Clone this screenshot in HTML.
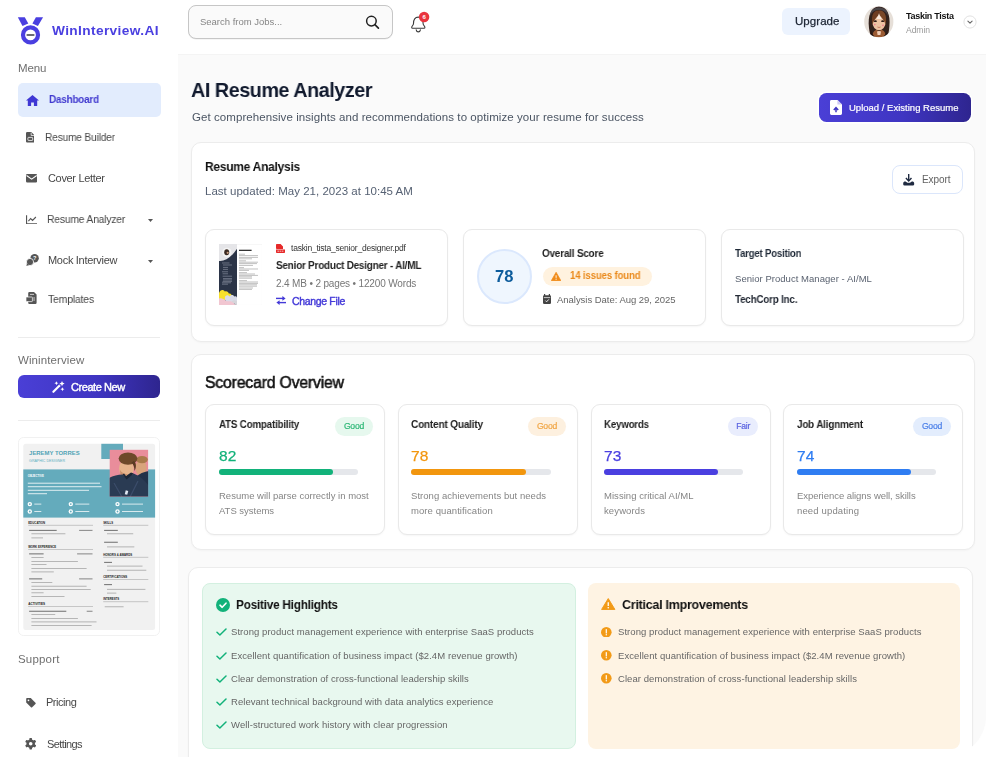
<!DOCTYPE html>
<html lang="en">
<head>
<meta charset="utf-8">
<title>WinInterview.AI - AI Resume Analyzer</title>
<style>
*{box-sizing:border-box;margin:0;padding:0}
html,body{width:987px;height:757px;overflow:hidden;background:#fff}
body{font-family:"Liberation Sans",sans-serif;color:#222;position:relative;-webkit-font-smoothing:antialiased}
.abs{position:absolute}
.t{position:absolute;white-space:nowrap;line-height:1;will-change:transform}
#main{position:absolute;left:177.5px;top:54px;width:808.5px;height:703px;background:#fafafa;border-top:1px solid #f4f4f4}
#side{position:absolute;left:0;top:0;width:178px;height:757px;background:#fff}
.nav{color:#474747;font-size:11px;letter-spacing:-0.2px}
.lab{color:#6f6f6f;font-size:12px}
.card{position:absolute;background:#fff;border:1px solid #ececec;border-radius:10px;box-shadow:0 1px 2px rgba(0,0,0,.03)}
.inner{position:absolute;background:#fff;border:1px solid #e9e9e9;border-radius:9px;box-shadow:0 1px 2px rgba(0,0,0,.04)}
.grad{background:linear-gradient(90deg,#4a3fd6 0%,#3f35c2 55%,#2e258f 100%)}
.sd{font-size:9.5px;color:#858585;letter-spacing:-0.1px}
.li{font-size:9.5px;color:#666;letter-spacing:-0.05px}
.hr{position:absolute;left:18px;width:142px;height:1px;background:#ececec}
</style>
</head>
<body>
<!-- ============ SIDEBAR ============ -->
<div id="side">
  <!-- logo -->
  <svg class="abs" style="left:17px;top:16px" width="28" height="30" viewBox="0 0 28 30">
    <path d="M.85 1.3 H7.8 L11.3 7.4 L5.5 10 Z" fill="#4a3fe0"/>
    <path d="M26.1 1.3 H18.9 L15.4 7.4 L20.9 10 Z" fill="#4a3fe0"/>
    <circle cx="13.5" cy="18.9" r="7.5" fill="none" stroke="#4a3fe0" stroke-width="4.2"/>
    <rect x="9.4" y="17.9" width="8.2" height="2" rx="1" fill="#6b6b72"/>
  </svg>
  <div class="t" id="logo" style="left:51.6px;top:24.3px;font-size:13.7px;font-weight:700;color:#4a3fe0;letter-spacing:0.37px">WinInterview.AI</div>

  <div class="t lab" id="menu" style="letter-spacing:-0.13px;left:18px;top:62.5px;font-size:11.5px">Menu</div>

  <div class="abs" style="left:18px;top:82.5px;width:142.6px;height:34.4px;border-radius:5px;background:#e2ecfd"></div>
  <svg class="abs" style="left:25.5px;top:94.5px" width="13" height="11" viewBox="0 0 13 11"><path d="M6.5 0 L13 5.6 L11.2 5.6 L11.2 11 L7.9 11 L7.9 7.4 L5.1 7.4 L5.1 11 L1.8 11 L1.8 5.6 L0 5.6 Z" fill="#3f37d4"/></svg>
  <div class="t" id="n0" style="transform-origin:0 50%;transform:scaleX(0.9481);left:49px;top:94px;font-size:10.5px;font-weight:700;color:#4039cf;letter-spacing:-0.25px">Dashboard</div>

  <!-- Resume Builder -->
  <svg class="abs" style="left:25.8px;top:132px" width="8.6" height="10.6" viewBox="0 0 9 11"><path d="M1.2 0 H5.6 L9 3.4 V9.8 A1.2 1.2 0 0 1 7.8 11 H1.2 A1.2 1.2 0 0 1 0 9.8 V1.2 A1.2 1.2 0 0 1 1.2 0 Z" fill="#555"/><path d="M5.4 .6 V3.6 H8.4" fill="none" stroke="#fff" stroke-width=".8"/><rect x="2" y="5.6" width="5" height="3.2" rx=".6" fill="none" stroke="#fff" stroke-width=".8"/></svg>
  <div class="t nav" id="n1" style="transform-origin:0 50%;transform:scaleX(0.9264);letter-spacing:-0.2px;left:45px;top:131.5px">Resume Builder</div>

  <!-- Cover Letter -->
  <svg class="abs" style="left:25.8px;top:174.2px" width="11.3" height="8.5" viewBox="0 0 12 9"><rect width="12" height="9" rx="1.4" fill="#555"/><path d="M.6 1.6 L6 5.4 L11.4 1.6" fill="none" stroke="#fff" stroke-width="1.1"/></svg>
  <div class="t nav" id="n2" style="letter-spacing:-0.33px;left:48px;top:172.5px">Cover Letter</div>

  <!-- Resume Analyzer -->
  <svg class="abs" style="left:25.8px;top:214.7px" width="11.2" height="9.6" viewBox="0 0 12 10"><path d="M.6 0 V9.4 H12" fill="none" stroke="#555" stroke-width="1.2"/><path d="M2.6 6.4 L5 3.6 L7 5.6 L10.6 2" fill="none" stroke="#555" stroke-width="1.2"/></svg>
  <div class="t nav" id="n3" style="transform-origin:0 50%;transform:scaleX(0.9386);letter-spacing:-0.2px;left:47.3px;top:214px">Resume Analyzer</div>
  <svg class="abs" style="left:147.5px;top:218.5px" width="5" height="3" viewBox="0 0 5 3"><path d="M0 0 H5 L2.5 3 Z" fill="#555"/></svg>

  <!-- Mock Interview -->
  <svg class="abs" style="left:25.5px;top:254px" width="13" height="12" viewBox="0 0 13 12"><circle cx="8.6" cy="4.2" r="4.2" fill="#555"/><circle cx="4" cy="8" r="3.6" fill="#555" stroke="#fff" stroke-width=".8"/><path d="M1 9.6 L.4 12 L3.2 11" fill="#555"/><text x="8.7" y="6.3" font-size="5.6" font-weight="700" fill="#fff" text-anchor="middle" font-family="Liberation Sans, sans-serif">?</text></svg>
  <div class="t nav" id="n4" style="letter-spacing:-0.3px;left:48.4px;top:254.5px">Mock Interview</div>
  <svg class="abs" style="left:147.5px;top:259.5px" width="5" height="3" viewBox="0 0 5 3"><path d="M0 0 H5 L2.5 3 Z" fill="#555"/></svg>

  <!-- Templates -->
  <svg class="abs" style="left:25.5px;top:292px" width="11" height="12" viewBox="0 0 11 12"><path d="M3.4 0 H8 L10.6 2.6 V10.8 A1.2 1.2 0 0 1 9.4 12 H3.4 A1.2 1.2 0 0 1 2.2 10.8 V1.2 A1.2 1.2 0 0 1 3.4 0 Z" fill="#555"/><rect x="0" y="5" width="6.4" height="4.6" rx=".6" fill="#555" stroke="#fff" stroke-width=".7"/><path d="M4 2.4 H8 M7.2 6 H9 M7.2 8 H9" stroke="#fff" stroke-width=".7"/></svg>
  <div class="t nav" id="n5" style="transform-origin:0 50%;transform:scaleX(0.9517);letter-spacing:-0.2px;left:47.5px;top:293.5px">Templates</div>

  <div class="hr" style="top:337px"></div>
  <div class="t lab" id="wi" style="letter-spacing:0.1px;left:18px;top:355px;font-size:11.5px">Wininterview</div>

  <div class="abs grad" style="left:18px;top:375.3px;width:142px;height:22.8px;border-radius:6px"></div>
  <svg class="abs" style="left:52px;top:380.5px" width="13" height="12" viewBox="0 0 13 12"><path d="M1.4 10.8 L7.6 4.6" stroke="#fff" stroke-width="2.1" stroke-linecap="round"/><path d="M7.2 3.4 L8.8 5 " stroke="#4036c6" stroke-width=".7"/><path d="M10 0 l.8 1.8 1.8.8 -1.8.8 -.8 1.8 -.8-1.8 -1.8-.8 1.8-.8z M4.4 .2 l.6 1.4 1.4.6 -1.4.6 -.6 1.4 -.6-1.4 -1.4-.6 1.4-.6z M10.4 6.2 l.6 1.4 1.4.6 -1.4.6 -.6 1.4 -.6-1.4 -1.4-.6 1.4-.6z" fill="#fff"/></svg>
  <div class="t" id="cn" style="left:71px;top:381.5px;font-size:11px;color:#fff;letter-spacing:-0.43px;-webkit-text-stroke:.4px #fff">Create New</div>

  <div class="hr" style="top:420px"></div>

  <!-- resume thumbnail -->
<svg class="abs" style="left:18px;top:437px" width="142" height="199" viewBox="0 0 142 199"><defs><filter id="b1" x="-10%" y="-10%" width="120%" height="120%"><feGaussianBlur stdDeviation=".5"/></filter></defs>
<rect x=".5" y=".5" width="141" height="198" rx="5" fill="#fff" stroke="#f1f1f1"/>
<rect x="5.3" y="6.8" width="131.8" height="186.2" rx="2.5" fill="#f1f1f1"/>
<rect x="5.3" y="32.4" width="131.8" height="48.2" fill="#64abbc"/>
<rect x="83.3" y="6.8" width="21.7" height="15.2" fill="#64abbc"/>
<g>
<rect x="91.7" y="12.8" width="38.4" height="46.8" fill="#e98d9b"/>
<clipPath id="phc"><rect x="91.7" y="12.8" width="38.4" height="46.8"/></clipPath>
<g clip-path="url(#phc)" filter="url(#b1)">
<ellipse cx="123" cy="31" rx="5.6" ry="7.8" fill="#d9a47c"/>
<ellipse cx="124" cy="22.6" rx="5.8" ry="3.6" fill="#a97a4c"/>
<path d="M116 44 C118 38 124 35 131 34 V60 H114 Z" fill="#22324a"/>
<ellipse cx="108.4" cy="31.6" rx="7.3" ry="9.2" fill="#e6b48c"/>
<path d="M102 33 C104 36 107 37.6 110 37 C108 39 104 39 102.4 37 Z" fill="#c98f6a"/>
<ellipse cx="110" cy="21.6" rx="9.4" ry="6.2" fill="#6e4a2c"/>
<path d="M116 24 C118.6 26 118.4 31 116.4 34 C116.6 30 115.4 27 113.4 25.4 Z" fill="#5a3a22"/>
<path d="M91 41 C95 38.6 100 37.6 104.6 37.4 L108.6 41 L115.6 36.4 C122 39 127 43 131 49 V60 H91 Z" fill="#2a3a52"/>
<path d="M104.6 37.4 L108.6 42.6 L115.6 36.4 L113 35.6 L108 39 L106 36.6 Z" fill="#1a2636"/>
<path d="M96 46 L104 60 M120 44 L112 60" stroke="#3b4e6a" stroke-width="1.2"/>
<rect x="107.2" y="53.6" width="2.6" height="4" fill="#dfe8f2" transform="rotate(14 108.5 55.6)"/>
</g></g>
<text x="11.1" y="17.7" font-family="Liberation Sans, sans-serif" font-weight="700" font-size="5.9" fill="#4fa3b5" textLength="50.5" lengthAdjust="spacingAndGlyphs">JEREMY TORRES</text>
<text x="11.1" y="25" font-family="Liberation Sans, sans-serif" font-size="3.2" fill="#5fb0bf" textLength="36" lengthAdjust="spacingAndGlyphs">GRAPHIC DESIGNER</text>
<text x="9.8" y="40.2" font-family="Liberation Sans, sans-serif" font-weight="700" font-size="3" fill="#fff" textLength="16" lengthAdjust="spacingAndGlyphs">OBJECTIVE</text>
<rect x="9.8" y="45.7" width="72.2" height="1" fill="#fff" opacity="0.8"/>
<rect x="9.8" y="49.2" width="73.7" height="1" fill="#fff" opacity="0.8"/>
<rect x="9.8" y="52.8" width="61.2" height="1" fill="#fff" opacity="0.8"/>
<rect x="9.8" y="56.2" width="19.2" height="1" fill="#fff" opacity="0.8"/>
<circle cx="11.8" cy="67.1" r="2.2" fill="#fff"/><circle cx="11.8" cy="67.1" r=".9" fill="#64abbc"/>
<rect x="16.3" y="66.6" width="7.0" height="1" fill="#fff" opacity="0.75"/>
<circle cx="11.8" cy="74.5" r="2.2" fill="#fff"/><circle cx="11.8" cy="74.5" r=".9" fill="#64abbc"/>
<rect x="16.3" y="74.0" width="7.0" height="1" fill="#fff" opacity="0.75"/>
<circle cx="52.8" cy="67.1" r="2.2" fill="#fff"/><circle cx="52.8" cy="67.1" r=".9" fill="#64abbc"/>
<rect x="57.3" y="66.6" width="14.0" height="1" fill="#fff" opacity="0.75"/>
<circle cx="52.8" cy="74.5" r="2.2" fill="#fff"/><circle cx="52.8" cy="74.5" r=".9" fill="#64abbc"/>
<rect x="57.3" y="74.0" width="14.0" height="1" fill="#fff" opacity="0.75"/>
<circle cx="99.5" cy="67.1" r="2.2" fill="#fff"/><circle cx="99.5" cy="67.1" r=".9" fill="#64abbc"/>
<rect x="104.0" y="66.6" width="21.0" height="1" fill="#fff" opacity="0.75"/>
<circle cx="99.5" cy="74.5" r="2.2" fill="#fff"/><circle cx="99.5" cy="74.5" r=".9" fill="#64abbc"/>
<rect x="104.0" y="74.0" width="21.0" height="1" fill="#fff" opacity="0.75"/>
<text x="10.2" y="86.6" font-family="Liberation Sans, sans-serif" font-weight="700" font-size="3" fill="#222" textLength="17" lengthAdjust="spacingAndGlyphs">EDUCATION</text><rect x="10.2" y="87.9" width="64.8" height="0.5" fill="#9a9a9a" opacity="1"/>
<text x="10.2" y="110.7" font-family="Liberation Sans, sans-serif" font-weight="700" font-size="3" fill="#222" textLength="28" lengthAdjust="spacingAndGlyphs">WORK EXPERIENCE</text><rect x="10.2" y="112.0" width="64.8" height="0.5" fill="#9a9a9a" opacity="1"/>
<text x="10.2" y="168.0" font-family="Liberation Sans, sans-serif" font-weight="700" font-size="3" fill="#222" textLength="17" lengthAdjust="spacingAndGlyphs">ACTIVITIES</text><rect x="10.2" y="169.2" width="64.8" height="0.5" fill="#9a9a9a" opacity="1"/>
<text x="85.2" y="86.6" font-family="Liberation Sans, sans-serif" font-weight="700" font-size="3" fill="#222" textLength="10" lengthAdjust="spacingAndGlyphs">SKILLS</text><rect x="85.2" y="87.9" width="45.1" height="0.5" fill="#9a9a9a" opacity="1"/>
<text x="85.2" y="118.6" font-family="Liberation Sans, sans-serif" font-weight="700" font-size="3" fill="#222" textLength="29" lengthAdjust="spacingAndGlyphs">HONORS &amp; AWARDS</text><rect x="85.2" y="119.9" width="45.1" height="0.5" fill="#9a9a9a" opacity="1"/>
<text x="85.2" y="140.9" font-family="Liberation Sans, sans-serif" font-weight="700" font-size="3" fill="#222" textLength="24" lengthAdjust="spacingAndGlyphs">CERTIFICATIONS</text><rect x="85.2" y="142.1" width="45.1" height="0.5" fill="#9a9a9a" opacity="1"/>
<text x="85.2" y="163.3" font-family="Liberation Sans, sans-serif" font-weight="700" font-size="3" fill="#222" textLength="16" lengthAdjust="spacingAndGlyphs">INTERESTS</text><rect x="85.2" y="164.6" width="45.1" height="0.5" fill="#9a9a9a" opacity="1"/>
<rect x="11.1" y="92.9" width="27.6" height="0.8" fill="#333" opacity="0.85"/>
<rect x="61.1" y="92.9" width="13.4" height="0.8" fill="#555" opacity="0.85"/>
<rect x="13.4" y="96.4" width="34.0" height="0.8" fill="#999" opacity="0.85"/>
<rect x="13.4" y="100.5" width="11.6" height="0.8" fill="#999" opacity="0.85"/>
<rect x="11.1" y="116.5" width="14.5" height="0.8" fill="#333" opacity="0.85"/>
<rect x="59.1" y="116.5" width="15.4" height="0.8" fill="#555" opacity="0.85"/>
<rect x="13.4" y="120.0" width="12.2" height="0.8" fill="#999" opacity="0.85"/>
<rect x="13.4" y="124.0" width="46.5" height="0.8" fill="#999" opacity="0.85"/>
<rect x="13.4" y="127.2" width="15.1" height="0.8" fill="#999" opacity="0.85"/>
<rect x="13.4" y="131.0" width="55.2" height="0.8" fill="#999" opacity="0.85"/>
<rect x="13.4" y="134.5" width="22.4" height="0.8" fill="#999" opacity="0.85"/>
<rect x="11.1" y="141.5" width="13.1" height="0.8" fill="#333" opacity="0.85"/>
<rect x="61.1" y="141.5" width="13.4" height="0.8" fill="#555" opacity="0.85"/>
<rect x="13.4" y="145.0" width="20.9" height="0.8" fill="#999" opacity="0.85"/>
<rect x="13.4" y="148.8" width="55.2" height="0.8" fill="#999" opacity="0.85"/>
<rect x="13.4" y="152.2" width="59.3" height="0.8" fill="#999" opacity="0.85"/>
<rect x="13.4" y="155.4" width="12.2" height="0.8" fill="#999" opacity="0.85"/>
<rect x="13.4" y="159.2" width="33.1" height="0.8" fill="#999" opacity="0.85"/>
<rect x="11.1" y="173.8" width="37.2" height="0.8" fill="#333" opacity="0.85"/>
<rect x="68.7" y="173.8" width="5.8" height="0.8" fill="#555" opacity="0.85"/>
<rect x="13.4" y="177.2" width="23.8" height="0.8" fill="#999" opacity="0.85"/>
<rect x="13.4" y="181.0" width="46.5" height="0.8" fill="#999" opacity="0.85"/>
<rect x="13.4" y="184.5" width="65.1" height="0.8" fill="#999" opacity="0.85"/>
<rect x="13.4" y="188.0" width="60.2" height="0.8" fill="#999" opacity="0.85"/>
<rect x="86.1" y="92.9" width="13.7" height="0.8" fill="#333" opacity="0.85"/>
<rect x="89.0" y="96.4" width="26.2" height="0.8" fill="#999" opacity="0.85"/>
<rect x="86.1" y="104.8" width="13.7" height="0.8" fill="#333" opacity="0.85"/>
<rect x="89.0" y="109.5" width="27.3" height="0.8" fill="#999" opacity="0.85"/>
<rect x="86.1" y="124.9" width="7.9" height="0.8" fill="#333" opacity="0.85"/>
<rect x="89.0" y="128.7" width="35.5" height="0.8" fill="#999" opacity="0.85"/>
<rect x="89.0" y="132.8" width="39.3" height="0.8" fill="#999" opacity="0.85"/>
<rect x="86.1" y="147.3" width="7.9" height="0.8" fill="#333" opacity="0.85"/>
<rect x="89.0" y="151.9" width="38.4" height="0.8" fill="#999" opacity="0.85"/>
<rect x="89.0" y="155.7" width="9.3" height="0.8" fill="#999" opacity="0.85"/>
<rect x="86.7" y="169.4" width="18.9" height="0.8" fill="#999" opacity="0.85"/>
</svg>
  <div class="t lab" id="su" style="letter-spacing:0.19px;left:18px;top:654px;font-size:11.5px">Support</div>
  <svg class="abs" style="left:25.7px;top:698px" width="10" height="9.6" viewBox="0 0 11 11"><path d="M0 1 A1 1 0 0 1 1 0 H5.2 L10.6 5.4 A1 1 0 0 1 10.6 6.8 L6.8 10.6 A1 1 0 0 1 5.4 10.6 L0 5.2 Z" fill="#555"/><circle cx="2.6" cy="2.6" r="1" fill="#fff"/></svg>
  <div class="t nav" id="n6" style="letter-spacing:-0.47px;left:46px;top:696.5px">Pricing</div>
  <svg class="abs" style="left:25.2px;top:738.2px" width="11.4" height="11.4" viewBox="0 0 12 12"><g fill="#555"><circle cx="6" cy="6" r="4.5"/><rect x="4.6" y="0" width="2.8" height="12" rx=".7"/><rect x="4.6" y="0" width="2.8" height="12" rx=".7" transform="rotate(60 6 6)"/><rect x="4.6" y="0" width="2.8" height="12" rx=".7" transform="rotate(120 6 6)"/></g><circle cx="6" cy="6" r="1.9" fill="#fff"/></svg>
  <div class="t nav" id="n7" style="letter-spacing:-0.61px;left:47.4px;top:738.5px">Settings</div>
</div>

<!-- ============ HEADER ============ -->
<div class="abs" style="left:188.4px;top:5.2px;width:204.6px;height:33.4px;border:1.6px solid #c6c6c6;border-radius:8px;background:#fafafa;box-shadow:0 .6px 0 rgba(0,0,0,.08)"></div>
<div class="t" id="sp" style="left:200px;top:17px;font-size:9.5px;color:#858585;letter-spacing:-0.01px">Search from Jobs...</div>
<svg class="abs" style="left:365px;top:15px" width="15" height="15" viewBox="0 0 15 15"><circle cx="6.4" cy="6.1" r="4.8" fill="none" stroke="#222" stroke-width="1.5"/><path d="M9.9 9.7 L13.4 13.1" stroke="#222" stroke-width="1.7" stroke-linecap="round"/></svg>
<svg class="abs" style="left:410px;top:11px" width="20" height="23" viewBox="0 0 20 23"><path d="M1.7 16.4 C1.7 15 3.5 14.4 3.5 12.4 C3.5 8.6 5 6.1 8.3 6.1 C11.6 6.1 13.1 8.6 13.1 12.4 C13.1 14.4 14.9 15 14.9 16.4 C14.9 17 14.5 17.3 14 17.3 H2.6 C2.1 17.3 1.7 17 1.7 16.4 Z" fill="none" stroke="#3a3a3a" stroke-width="1.1"/><path d="M6.2 18.8 C6.5 20.3 7.4 20.9 8.3 20.9 C9.2 20.9 10.1 20.3 10.4 18.8" fill="none" stroke="#3a3a3a" stroke-width="1.1" stroke-linecap="round"/><circle cx="14.1" cy="6" r="5.2" fill="#e9343e"/><text x="14.1" y="8.1" font-size="6" fill="#fff" text-anchor="middle" font-family="Liberation Sans, sans-serif" font-weight="700">6</text></svg>

<div class="abs" style="left:782px;top:8px;width:68px;height:27px;border-radius:6px;background:#ecf3fe"></div>
<div class="t" id="up" style="letter-spacing:0.06px;left:795px;top:16.1px;font-size:11.5px;color:#1c2433;-webkit-text-stroke:.25px #1c2433">Upgrade</div>

<!-- avatar -->
<svg class="abs" style="left:863.5px;top:6px" width="30" height="31.5" viewBox="0 0 30 31.5">
  <defs><clipPath id="avc"><ellipse cx="14.8" cy="15.7" rx="14.6" ry="15.5"/></clipPath><filter id="b2" x="-10%" y="-10%" width="120%" height="120%"><feGaussianBlur stdDeviation=".55"/></filter></defs>
  <ellipse cx="14.8" cy="15.7" rx="14.6" ry="15.5" fill="#e6dfd8"/>
  <g clip-path="url(#avc)" filter="url(#b2)">
    <path d="M5 22 C3.6 10 7 .6 15 .6 C23 .6 26.6 9 25.4 20 C25 25 24.6 28 23 31 H7.4 C5.8 28 5.4 25 5 22 Z" fill="#33201a"/>
    <path d="M6 10 C6 4 10 1.4 15 1.4 C20 1.4 24 4 24 10 C22 5 18 4 15 4 C12 4 8 5 6 10 Z" fill="#5a636e" opacity=".55"/>
    <ellipse cx="15" cy="16.6" rx="6.6" ry="7.6" fill="#edc3a3"/>
    <path d="M15 6.4 L17.6 13 H12.4 Z" fill="#fbeade"/>
    <path d="M15 4.6 C12.6 4 9.4 5.6 8.4 9.4 C7.6 12.6 7.8 16 8.6 19 C9 15 11.6 12.6 14.2 9.4 C14.8 8 15 6.4 15 4.6 Z" fill="#6e3d22"/>
    <path d="M15 4.6 C17.4 4 20.6 5.6 21.6 9.4 C22.4 12.6 22.2 16 21.4 19 C21 15 18.4 12.6 15.8 9.4 C15.2 8 15 6.4 15 4.6 Z" fill="#7a4627"/>
    <ellipse cx="11.4" cy="15.2" rx="1.5" ry=".9" fill="#2c1a12"/><ellipse cx="18.6" cy="15.2" rx="1.5" ry=".9" fill="#2c1a12"/>
    <circle cx="10.8" cy="18.6" r=".8" fill="#ee7a8f"/><circle cx="19" cy="19.4" r=".8" fill="#ee7a8f"/>
    <path d="M13.4 21 Q15 22 16.6 21" stroke="#b5604a" stroke-width=".7" fill="none"/>
    <path d="M8.6 31.5 C8 26.6 10.4 24 13 24 L15 25.2 L17 24 C20 24 22 26.6 21.4 31.5 Z" fill="#9a5a32"/>
    <path d="M13 25.6 C14 24.8 16 24.8 17 25.6 L16.4 29 H13.6 Z" fill="#f0cdb6"/>
    <path d="M6.4 24 C7.4 27 9 29.4 11 30.6 L8 31.5 Z M23.4 24 C22.4 27 21 29.4 19 30.6 L22 31.5 Z" fill="#24160f"/>
  </g>
</svg>
<div class="t" id="tt" style="left:906px;top:11.6px;font-size:9px;font-weight:700;color:#111;letter-spacing:-0.3px">Taskin Tista</div>
<div class="t" id="ad" style="letter-spacing:-0.09px;left:906px;top:25.7px;font-size:8.6px;color:#9a9a9a">Admin</div>
<svg class="abs" style="left:963px;top:14.8px" width="14" height="14" viewBox="0 0 14 14"><circle cx="7" cy="7" r="6.1" fill="#fff" stroke="#d9d9d9" stroke-width=".8"/><path d="M4.9 6.1 L7 8.2 L9.1 6.1" fill="none" stroke="#666" stroke-width="1.1" stroke-linecap="round" stroke-linejoin="round"/></svg>

<!-- ============ MAIN ============ -->
<div id="main"></div>

<div class="t" id="h1" style="transform-origin:0 50%;transform:scaleX(0.9422);left:191.3px;top:78.8px;font-size:21px;font-weight:700;color:#111a2e;letter-spacing:-0.5px">AI Resume Analyzer</div>
<div class="t" id="sub" style="left:192px;top:112px;font-size:11.5px;color:#4b5563;letter-spacing:0.07px">Get comprehensive insights and recommendations to optimize your resume for success</div>

<div class="abs grad" style="left:819px;top:93px;width:152.3px;height:28.6px;border-radius:7.5px;box-shadow:0 0 0 1.5px #fff"></div>
<svg class="abs" style="left:830px;top:100px" width="12" height="15" viewBox="0 0 12 15"><path d="M1.4 0 H7.6 L12 4.4 V13.6 A1.4 1.4 0 0 1 10.6 15 H1.4 A1.4 1.4 0 0 1 0 13.6 V1.4 A1.4 1.4 0 0 1 1.4 0 Z" fill="#fff"/><path d="M7.4 0 V4.6 H12" fill="#cfcaf5"/><path d="M6 12.2 V8.6 M3.8 10 L6 7.6 L8.2 10" fill="none" stroke="#3f35c2" stroke-width="1.5"/></svg>
<div class="t" id="ub" style="left:849px;top:102.5px;font-size:9.5px;color:#fff;-webkit-text-stroke:.2px #fff;letter-spacing:0.01px">Upload / Existing Resume</div>

<!-- CARD 1 -->
<div class="card" style="left:191px;top:142.2px;width:784.3px;height:200px"></div>
<div class="t" id="ra" style="transform-origin:0 50%;transform:scaleX(0.9244);left:204.6px;top:160.3px;font-size:13px;font-weight:700;color:#111;letter-spacing:-0.3px">Resume Analysis</div>
<div class="t" id="lu" style="left:204.9px;top:185.5px;font-size:11.5px;color:#566173;letter-spacing:0.02px">Last updated: May 21, 2023 at 10:45 AM</div>
<div class="abs" style="left:892px;top:164.8px;width:71.2px;height:29.2px;border:1.2px solid #dbe6fb;border-radius:8px;background:#fff"></div>
<svg class="abs" style="left:903.4px;top:174px" width="11.4" height="11.6" viewBox="0 0 11 11.6"><path d="M5.5 0 V6.2" stroke="#1f2a40" stroke-width="1.4"/><path d="M2.7 4 L5.5 6.9 L8.3 4" fill="none" stroke="#1f2a40" stroke-width="1.4"/><path d="M0 9.4 C0 8 1.2 7.4 2.4 7.6 L4.2 8.8 H6.8 L8.6 7.6 C9.8 7.4 11 8 11 9.4 V10.2 A1.4 1.4 0 0 1 9.6 11.6 H1.4 A1.4 1.4 0 0 1 0 10.2 Z" fill="#1f2a40"/></svg>
<div class="t" id="ex" style="left:922px;top:175px;font-size:10px;color:#626262;letter-spacing:-0.08px">Export</div>

<!-- inner 1 : file -->
<div class="inner" style="left:205px;top:229.4px;width:243.2px;height:97px"></div>
<svg class="abs" style="left:219px;top:244px" width="43.4" height="61.4" viewBox="0 0 43.4 61.4">
  <rect width="43.4" height="61.4" fill="#fff"/>
  <rect x=".25" y=".25" width="42.9" height="60.9" fill="none" stroke="#efefef" stroke-width=".5"/>
  <rect x="0" y="0" width="18" height="20" fill="#e5e5e8"/>
  <path d="M0 16.9 C5.5 17.6 12.5 13.4 18 4.7 V61.4 H0 Z" fill="#2b3447"/>
  <circle cx="7.9" cy="8.4" r="4.7" fill="#f4f4f4"/><ellipse cx="7.7" cy="8.2" rx="2.5" ry="3" fill="#3a2a22"/><circle cx="8.7" cy="8.8" r="1.1" fill="#c59a7c"/>
  <path d="M0 49 C1 45.6 4.6 45.2 5.8 47.6 C7.4 46.6 9.6 47.8 9.8 49.6 C11.6 49 13.2 50.6 12.6 52.4 L10 56 H0 Z" fill="#f7e02a"/>
  <path d="M5.8 54 C6 50.8 9.4 50.6 10.4 52.6 C11.6 50.4 14.6 50.4 15.4 52.6 C17 51.6 18 52.6 18 54 V59 H7 Z" fill="#d9dbe8"/>
  <path d="M0 54.6 C2.4 53.6 4.6 55 6.4 56.4 C8.6 58 11 56.6 12.6 57.6 C14.4 58.6 16 60 16.6 61.4 H0 Z" fill="#f1c6d1"/>
  <path d="M12.6 57.6 C14 56 16.4 56 18 57.2 V61.4 H16.6 C16 60 14.4 58.6 12.6 57.6 Z" fill="#d5d5da"/>
  <path d="M3 19 H10.5 M4 21 H13 M4 23.4 H9 M4 25.4 H9 M3 27.8 H9 M3.6 29.8 H9 M3.6 32.2 H13 M4 34.6 H13 M4 36 H13 M3.6 37.4 H13 M3 38.8 H12 M3 40.2 H9 " stroke="#aeb4c2" stroke-width=".6" opacity=".8"/>
  <rect x="20" y="5.7" width="12.6" height="1.3" fill="#333"/>
  <path d="M20 10.2 H26 M20 11.6 H39 M20 13.4 H39 M20 14.8 H33 M20 16.8 H27 M20 18.2 H39 M20 19.6 H38 M20 21.4 H34 M20 23.6 H25 M20 25 H39 M20 26.4 H30 M20 28.6 H28 M20 30 H36 M20 31.4 H39 M20 32.8 H33 M20 34.2 H33 M20 36.6 H28 M20 38 H39 M20 39.4 H39 M20 40.8 H38 M20 42.2 H38 M20 44 H34 M20 45.4 H33 " stroke="#8e8e8e" stroke-width=".55"/>
</svg>
<svg class="abs" style="left:275.5px;top:244px" width="9" height="9" viewBox="0 0 9 9"><path d="M.8 0 H4.6 L7 2.4 V5 H.8 A.8 .8 0 0 1 0 4.2 V.8 A.8 .8 0 0 1 .8 0 Z" fill="#e62929"/><path d="M0 5.4 H9 V8.2 A.8 .8 0 0 1 8.2 9 H.8 A.8 .8 0 0 1 0 8.2 Z" fill="#e62929"/><path d="M1.4 7.2 H7.6" stroke="#fff" stroke-width=".7" stroke-dasharray="1.6 .6"/></svg>
<div class="t" id="fn" style="left:290.5px;top:244px;font-size:8.5px;color:#333;letter-spacing:-0.21px">taskin_tista_senior_designer.pdf</div>
<div class="t" id="spd" style="transform-origin:0 50%;transform:scaleX(0.9495);left:275.5px;top:260px;font-size:10.5px;font-weight:700;color:#222;letter-spacing:-0.25px">Senior Product Designer - AI/ML</div>
<div class="t" id="mb" style="left:275.5px;top:279px;font-size:10px;color:#777;letter-spacing:-0.15px">2.4 MB • 2 pages • 12200 Words</div>
<svg class="abs" style="left:275.5px;top:296px" width="10" height="9" viewBox="0 0 10 9"><path d="M0 2.4 H7" stroke="#4339d8" stroke-width="1.4"/><path d="M6.4 0 L9.6 2.4 L6.4 4.8 Z" fill="#4339d8"/><path d="M10 6.6 H3" stroke="#4339d8" stroke-width="1.4"/><path d="M3.6 4.2 L.4 6.6 L3.6 9 Z" fill="#4339d8"/></svg>
<div class="t" id="cf" style="left:291.5px;top:295.5px;font-size:10.5px;color:#4339d8;letter-spacing:-0.34px;-webkit-text-stroke:.4px #4339d8">Change File</div>

<!-- inner 2 : score -->
<div class="inner" style="left:463px;top:229.4px;width:242.7px;height:97px"></div>
<div class="abs" style="left:476.5px;top:248.5px;width:55px;height:55px;border-radius:50%;background:#eff6fe;border:2px solid #dbe8fd"></div>
<div class="t" id="s78" style="left:495px;top:267.5px;font-size:16.5px;font-weight:700;color:#0d5c9c;letter-spacing:0.14px">78</div>
<div class="t" id="os" style="transform-origin:0 50%;transform:scaleX(0.9447);font-weight:700;left:541.9px;top:247.6px;font-size:10.5px;color:#222;letter-spacing:-0.2px">Overall Score</div>
<div class="abs" style="left:542.5px;top:266.5px;width:109.5px;height:19px;border-radius:9.5px;background:#fff2df"></div>
<svg class="abs" style="left:551.3px;top:271.8px" width="10.2" height="9.2" viewBox="0 0 11 10"><path d="M5.5 .3 L10.7 9.4 H.3 Z" fill="#f08a17" stroke="#f08a17" stroke-width=".8" stroke-linejoin="round"/><path d="M5.5 3.6 V6.4" stroke="#fff" stroke-width="1"/><circle cx="5.5" cy="7.8" r=".6" fill="#fff"/></svg>
<div class="t" id="iss" style="transform-origin:0 50%;transform:scaleX(0.9518);left:570px;top:270.5px;font-size:10px;font-weight:700;color:#ea8a1c;letter-spacing:-0.1px">14 issues found</div>
<svg class="abs" style="left:542.5px;top:294px" width="8" height="10" viewBox="0 0 8 10"><path d="M1.6 0 V2 M6.4 0 V2" stroke="#444" stroke-width="1.2"/><rect x="0" y="1.2" width="8" height="8.8" rx="1.2" fill="#444"/><path d="M.8 3.6 H7.2" stroke="#fff" stroke-width=".7"/><path d="M2.4 6.6 L3.6 7.8 L5.8 5.4" fill="none" stroke="#fff" stroke-width=".9"/></svg>
<div class="t" id="adt" style="left:557px;top:294.5px;font-size:9.5px;color:#666;letter-spacing:-0.03px">Analysis Date: Aug 29, 2025</div>

<!-- inner 3 : target -->
<div class="inner" style="left:720.5px;top:229.4px;width:243.1px;height:97px"></div>
<div class="t" id="tp" style="transform-origin:0 50%;transform:scaleX(0.9216);left:734.5px;top:248px;font-size:10.5px;font-weight:700;color:#1f2937;letter-spacing:-0.25px">Target Position</div>
<div class="t" id="spm" style="left:734.5px;top:274px;font-size:9.5px;color:#5a6270;letter-spacing:0.04px">Senior Product Manager - AI/ML</div>
<div class="t" id="tc" style="transform-origin:0 50%;transform:scaleX(0.9336);font-weight:700;left:734.5px;top:294px;font-size:10.5px;color:#252b36;letter-spacing:-0.2px">TechCorp Inc.</div>
<!-- CARD 2 -->
<div class="card" style="left:191px;top:354px;width:784px;height:196px"></div>
<div class="t" id="so" style="transform-origin:0 50%;transform:scaleX(0.9576);left:204.7px;top:374px;font-size:16.5px;color:#111;letter-spacing:-0.2px;-webkit-text-stroke:.55px #111">Scorecard Overview</div>

<div class="inner" style="left:205.2px;top:404px;width:180px;height:130.5px"></div>
<div class="t" id="st0" style="transform-origin:0 50%;transform:scaleX(0.93);font-weight:700;left:218.5px;top:419px;font-size:10.5px;color:#222;letter-spacing:-0.2px">ATS Compatibility</div>
<div class="abs" style="left:335.2px;top:417px;width:38px;height:18.5px;border-radius:9.5px;background:#e6f8ee"></div>
<div class="t" id="sp0" style="left:335.2px;width:38px;text-align:center;top:422.2px;font-size:8.6px;color:#2eb877;letter-spacing:-0.2px;-webkit-text-stroke:.2px #2eb877">Good</div>
<div class="t" id="sn0" style="-webkit-text-stroke:.25px #12b27a;left:218.5px;top:448px;font-size:15.5px;color:#12b27a;letter-spacing:0.05px">82</div>
<div class="abs" style="left:218.5px;top:468.5px;width:139.6px;height:6px;border-radius:3px;background:#e5e7eb"></div>
<div class="abs" style="left:218.5px;top:468.5px;width:114.5px;height:6px;border-radius:3px;background:#12b27a"></div>
<div class="t sd" id="sa0" style="letter-spacing:0.01px;left:218.5px;top:491px">Resume will parse correctly in most</div>
<div class="t sd" id="sb0" style="letter-spacing:-0.02px;left:218.5px;top:506px">ATS systems</div>

<div class="inner" style="left:397.9px;top:404px;width:180px;height:130.5px"></div>
<div class="t" id="st1" style="transform-origin:0 50%;transform:scaleX(0.9566);font-weight:700;left:411.2px;top:419px;font-size:10.5px;color:#222;letter-spacing:-0.2px">Content Quality</div>
<div class="abs" style="left:527.9px;top:417px;width:38px;height:18.5px;border-radius:9.5px;background:#fdf0df"></div>
<div class="t" id="sp1" style="left:527.9px;width:38px;text-align:center;top:422.2px;font-size:8.6px;color:#f0a646;letter-spacing:-0.2px;-webkit-text-stroke:.2px #f0a646">Good</div>
<div class="t" id="sn1" style="-webkit-text-stroke:.25px #f2960e;left:411.2px;top:448px;font-size:15.5px;color:#f2960e;letter-spacing:0.16px">78</div>
<div class="abs" style="left:411.2px;top:468.5px;width:139.6px;height:6px;border-radius:3px;background:#e5e7eb"></div>
<div class="abs" style="left:411.2px;top:468.5px;width:114.5px;height:6px;border-radius:3px;background:#f2960e"></div>
<div class="t sd" id="sa1" style="letter-spacing:0.05px;left:411.2px;top:491px">Strong achievements but needs</div>
<div class="t sd" id="sb1" style="letter-spacing:0.08px;left:411.2px;top:506px">more quantification</div>

<div class="inner" style="left:590.6px;top:404px;width:180px;height:130.5px"></div>
<div class="t" id="st2" style="transform-origin:0 50%;transform:scaleX(0.9222);font-weight:700;left:603.9px;top:419px;font-size:10.5px;color:#222;letter-spacing:-0.2px">Keywords</div>
<div class="abs" style="left:727.9px;top:417px;width:30.4px;height:18.5px;border-radius:9.5px;background:#e9edfd"></div>
<div class="t" id="sp2" style="left:727.9px;width:30.4px;text-align:center;top:422.2px;font-size:8.6px;color:#5a63e0;letter-spacing:-0.2px;-webkit-text-stroke:.2px #5a63e0">Fair</div>
<div class="t" id="sn2" style="-webkit-text-stroke:.25px #4a3fe0;left:603.9px;top:448px;font-size:15.5px;color:#4a3fe0;letter-spacing:0.24px">73</div>
<div class="abs" style="left:603.9px;top:468.5px;width:139.6px;height:6px;border-radius:3px;background:#e5e7eb"></div>
<div class="abs" style="left:603.9px;top:468.5px;width:114.5px;height:6px;border-radius:3px;background:#4a3fe0"></div>
<div class="t sd" id="sa2" style="letter-spacing:0.04px;left:603.9px;top:491px">Missing critical AI/ML</div>
<div class="t sd" id="sb2" style="letter-spacing:0.12px;left:603.9px;top:506px">keywords</div>

<div class="inner" style="left:783.3px;top:404px;width:180px;height:130.5px"></div>
<div class="t" id="st3" style="transform-origin:0 50%;transform:scaleX(0.941);font-weight:700;left:796.6px;top:419px;font-size:10.5px;color:#222;letter-spacing:-0.2px">Job Alignment</div>
<div class="abs" style="left:913.3px;top:417px;width:38px;height:18.5px;border-radius:9.5px;background:#e3edfd"></div>
<div class="t" id="sp3" style="left:913.3px;width:38px;text-align:center;top:422.2px;font-size:8.6px;color:#4a7fe8;letter-spacing:-0.2px;-webkit-text-stroke:.2px #4a7fe8">Good</div>
<div class="t" id="sn3" style="-webkit-text-stroke:.25px #2f7df2;left:796.6px;top:448px;font-size:15.5px;color:#2f7df2;letter-spacing:0.16px">74</div>
<div class="abs" style="left:796.6px;top:468.5px;width:139.6px;height:6px;border-radius:3px;background:#e5e7eb"></div>
<div class="abs" style="left:796.6px;top:468.5px;width:114.5px;height:6px;border-radius:3px;background:#2f7df2"></div>
<div class="t sd" id="sa3" style="letter-spacing:-0.04px;left:796.6px;top:491px">Experience aligns well, skills</div>
<div class="t sd" id="sb3" style="letter-spacing:0.15px;left:796.6px;top:506px">need updating</div>
<!-- CARD 3 -->
<div class="card" style="left:188.4px;top:566.9px;width:784.2px;height:220px"></div>
<div class="abs" style="left:202px;top:583.1px;width:373.6px;height:166.4px;border-radius:8px;background:#e8f8ef;border:1px solid #d3f0e0"></div>
<svg class="abs" style="left:215.7px;top:597.9px" width="14" height="14" viewBox="0 0 14 14"><circle cx="7" cy="7" r="7" fill="#12b27a"/><path d="M4 7.2 L6.2 9.3 L10 5.2" fill="none" stroke="#fff" stroke-width="1.6" stroke-linecap="round" stroke-linejoin="round"/></svg>
<div class="t" id="ph" style="transform-origin:0 50%;transform:scaleX(0.8783);left:236px;top:597.9px;font-size:13.5px;font-weight:700;color:#111;letter-spacing:-0.3px">Positive Highlights</div>
<svg class="abs" style="left:215.7px;top:628.2px" width="11" height="8" viewBox="0 0 11 8"><path d="M1 4.2 L3.9 7 L10 1" fill="none" stroke="#12b27a" stroke-width="1.5" stroke-linecap="round" stroke-linejoin="round"/></svg>
<div class="t li" id="g0" style="letter-spacing:0.06px;left:230.5px;top:627.2px">Strong product management experience with enterprise SaaS products</div>
<svg class="abs" style="left:215.7px;top:651.6px" width="11" height="8" viewBox="0 0 11 8"><path d="M1 4.2 L3.9 7 L10 1" fill="none" stroke="#12b27a" stroke-width="1.5" stroke-linecap="round" stroke-linejoin="round"/></svg>
<div class="t li" id="g1" style="letter-spacing:0.07px;left:230.5px;top:650.6px">Excellent quantification of business impact ($2.4M revenue growth)</div>
<svg class="abs" style="left:215.7px;top:674.6px" width="11" height="8" viewBox="0 0 11 8"><path d="M1 4.2 L3.9 7 L10 1" fill="none" stroke="#12b27a" stroke-width="1.5" stroke-linecap="round" stroke-linejoin="round"/></svg>
<div class="t li" id="g2" style="letter-spacing:0.05px;left:230.5px;top:673.6px">Clear demonstration of cross-functional leadership skills</div>
<svg class="abs" style="left:215.7px;top:697.8px" width="11" height="8" viewBox="0 0 11 8"><path d="M1 4.2 L3.9 7 L10 1" fill="none" stroke="#12b27a" stroke-width="1.5" stroke-linecap="round" stroke-linejoin="round"/></svg>
<div class="t li" id="g3" style="letter-spacing:0.05px;left:230.5px;top:696.8px">Relevant technical background with data analytics experience</div>
<svg class="abs" style="left:215.7px;top:721.0px" width="11" height="8" viewBox="0 0 11 8"><path d="M1 4.2 L3.9 7 L10 1" fill="none" stroke="#12b27a" stroke-width="1.5" stroke-linecap="round" stroke-linejoin="round"/></svg>
<div class="t li" id="g4" style="letter-spacing:0.09px;left:230.5px;top:720.0px">Well-structured work history with clear progression</div>
<div class="abs" style="left:587.6px;top:583.2px;width:372.9px;height:166.3px;border-radius:8px;background:#fef3e3"></div>
<svg class="abs" style="left:601px;top:597.9px" width="14.5" height="12.2" viewBox="0 0 14.5 13" preserveAspectRatio="none"><path d="M7.25 .6 L13.9 12.2 H.6 Z" fill="#f29a17" stroke="#f29a17" stroke-width="1" stroke-linejoin="round"/><path d="M7.25 4.6 V8.4" stroke="#fff" stroke-width="1.3"/><circle cx="7.25" cy="10.3" r=".8" fill="#fff"/></svg>
<div class="t" id="ci" style="transform-origin:0 50%;transform:scaleX(0.9293);left:621.9px;top:597.9px;font-size:13.5px;font-weight:700;color:#111;letter-spacing:-0.3px">Critical Improvements</div>
<svg class="abs" style="left:601.2px;top:626.9px" width="10.6" height="10.6" viewBox="0 0 10.6 10.6"><circle cx="5.3" cy="5.3" r="5.3" fill="#f29a17"/><path d="M5.3 2.6 V5.9" stroke="#fff" stroke-width="1.2" stroke-linecap="round"/><circle cx="5.3" cy="7.8" r=".7" fill="#fff"/></svg>
<div class="t li" id="o0" style="letter-spacing:0.07px;left:617.6px;top:627.2px">Strong product management experience with enterprise SaaS products</div>
<svg class="abs" style="left:601.2px;top:650.3px" width="10.6" height="10.6" viewBox="0 0 10.6 10.6"><circle cx="5.3" cy="5.3" r="5.3" fill="#f29a17"/><path d="M5.3 2.6 V5.9" stroke="#fff" stroke-width="1.2" stroke-linecap="round"/><circle cx="5.3" cy="7.8" r=".7" fill="#fff"/></svg>
<div class="t li" id="o1" style="letter-spacing:0.08px;left:617.6px;top:650.6px">Excellent quantification of business impact ($2.4M revenue growth)</div>
<svg class="abs" style="left:601.2px;top:673.3px" width="10.6" height="10.6" viewBox="0 0 10.6 10.6"><circle cx="5.3" cy="5.3" r="5.3" fill="#f29a17"/><path d="M5.3 2.6 V5.9" stroke="#fff" stroke-width="1.2" stroke-linecap="round"/><circle cx="5.3" cy="7.8" r=".7" fill="#fff"/></svg>
<div class="t li" id="o2" style="letter-spacing:0.07px;left:617.6px;top:673.6px">Clear demonstration of cross-functional leadership skills</div>

<svg class="abs" style="left:945px;top:716px" width="42" height="41" viewBox="0 0 42 41"><path d="M42 0 V41 H0 A42 41 0 0 0 41.2 0 Z" fill="#fff"/></svg>
</body>
</html>
